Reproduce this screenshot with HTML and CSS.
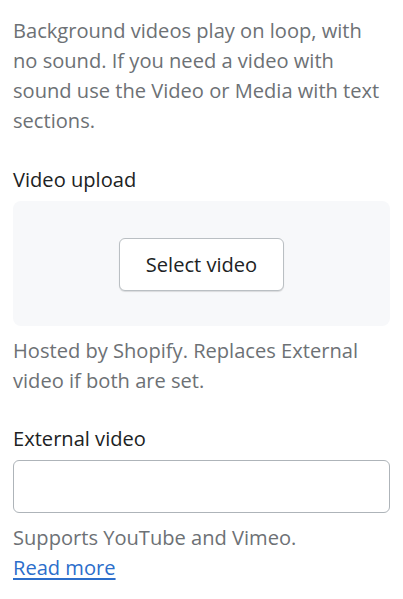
FILE: index.html
```html
<!DOCTYPE html>
<html>
<head>
<meta charset="utf-8">
<link rel="stylesheet" href="styles.css">
</head>
<body>
<div class="panel">
  <p class="help">Background videos play on loop, with no sound. If you need a video with sound use the Video or Media with text sections.</p>

  <div class="field">
    <div class="label">Video upload</div>
    <div class="dropzone">
      <button class="btn" type="button">Select video</button>
    </div>
    <p class="help">Hosted by Shopify. Replaces External video if both are set.</p>
  </div>

  <div class="field">
    <div class="label">External video</div>
    <input class="input" type="text">
    <p class="help">Supports YouTube and Vimeo.<br><a class="link" href="#">Read more</a></p>
  </div>
</div>
</body>
</html>
```
FILE: styles.css
```css
* { box-sizing: border-box; }
html, body { margin: 0; padding: 0; background: #ffffff; }
body {
  font-family: "Open Sans", "Noto Sans", sans-serif;
  font-size: 20.1px;
  line-height: 30px;
  color: #202223;
}
.panel {
  padding: 16px 13px 0 13px;
  width: 403px;
}
.help {
  margin: 0;
  color: #6d7175;
}
.field { margin-top: 29px; }
.field + .field { margin-top: 28px; }
.label {
  color: #202223;
  margin-bottom: 6px;
}
.dropzone {
  background: #f7f8fa;
  border-radius: 8px;
  height: 125px;
  display: flex;
  align-items: center;
  justify-content: center;
  margin-bottom: 10px;
}
.btn {
  font: inherit;
  font-weight: 500;
  color: #202223;
  background: #ffffff;
  border: 1px solid #babfc3;
  border-radius: 6px;
  width: 165px;
  height: 53px;
  box-shadow: 0 1px 1px rgba(0,0,0,0.12);
  margin-top: 2px;
}
.input {
  display: block;
  width: 100%;
  height: 53px;
  border: 1px solid #aeb4b9;
  border-radius: 6px;
  font: inherit;
  margin-bottom: 10px;
}
.link {
  color: #2c6ecb;
  text-decoration: underline;
  text-underline-offset: 3px;
}
```
